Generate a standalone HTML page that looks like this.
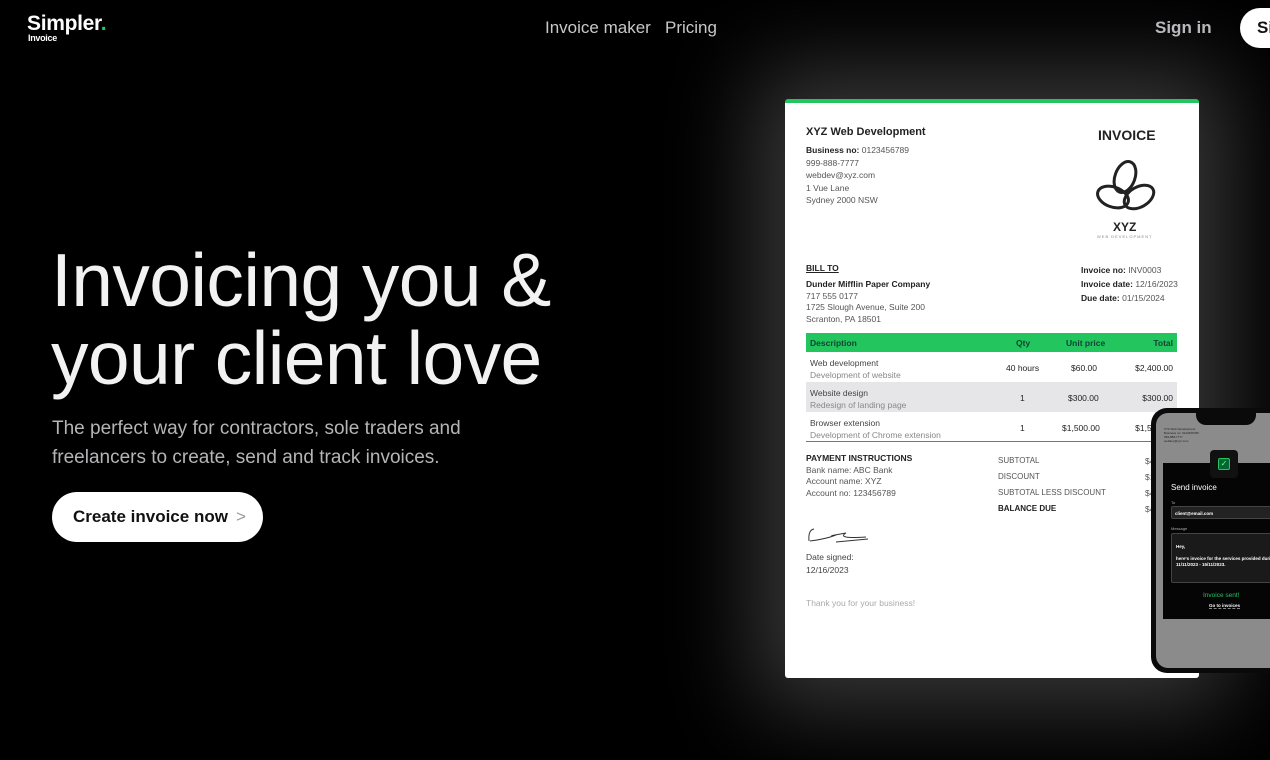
<!DOCTYPE html>
<html><head><meta charset="utf-8"><style>
*{margin:0;padding:0;box-sizing:border-box}
body{width:1270px;height:760px;background:#000;overflow:hidden;position:relative;font-family:"Liberation Sans",Arial,sans-serif;color:#fff}
.abs{position:absolute}
.logo{left:27px;top:12px;font-size:21px;font-weight:bold;letter-spacing:-0.3px}
.logo span{color:#22c55e}
.logo small{position:absolute;left:1px;top:21px;font-size:9px;font-weight:bold;white-space:nowrap}
.nav{top:18px;font-size:17px;color:#c8c8c8}
h1{position:absolute;left:51px;top:241px;font-weight:normal;font-size:75px;line-height:78px;letter-spacing:-0.6px;color:#f2f2f2}
.sub{left:52px;top:414px;font-size:19px;line-height:29px;color:#b5b5b8}
.btn{left:52px;top:492px;width:211px;height:50px;background:#fff;border-radius:25px;color:#111;font-size:17px;font-weight:bold;padding:15px 0 0 21px}
.btn i{font-style:normal;color:#999;font-weight:normal;margin-left:8px}
.card{left:785px;top:99px;width:414px;height:579px;background:#fff;border-top:4px solid #22c55e;border-radius:3px;box-shadow:0 0 90px 30px rgba(255,255,255,0.22);color:#222;font-size:8.5px}
.card .t{position:absolute;white-space:nowrap}
.g{color:#555}
.tbl{position:absolute;left:21px;top:230px;width:371px}
.row{height:30px;position:relative;font-size:8.5px}
.row div{position:absolute}
.phone{left:1151px;top:408px;width:140px;height:265px;background:#0a0a0a;border-radius:16px;padding:5px}
.scr{width:100%;height:100%;background:#8b8b8b;border-radius:12px;position:relative;overflow:hidden}
</style></head><body>
<div class="abs logo">Simpler<span>.</span><small>Invoice</small></div>
<div class="abs nav" style="left:545px">Invoice maker</div>
<div class="abs nav" style="left:665px">Pricing</div>
<div class="abs nav" style="left:1155px;font-weight:bold;color:#b8b8bc">Sign in</div>
<div class="abs" style="left:1240px;top:8px;width:80px;height:40px;background:#fff;border-radius:20px;color:#111;font-weight:bold;font-size:17px;padding:10px 0 0 17px">Si</div>

<h1>Invoicing you &amp;<br>your client love</h1>
<div class="abs sub">The perfect way for contractors, sole traders and<br>freelancers to create, send and track invoices.</div>
<div class="abs btn">Create invoice now<i>&gt;</i></div>

<div class="abs card">
 <div class="t" style="left:21px;top:23px;font-size:11px;font-weight:bold">XYZ Web Development</div>
 <div class="t g" style="left:21px;top:41px;line-height:12.5px"><b style="color:#222">Business no:</b> 0123456789<br>999-888-7777<br>webdev@xyz.com<br>1 Vue Lane<br>Sydney 2000 NSW</div>
 <div class="t" style="left:313px;top:24px;font-size:14px;font-weight:bold">INVOICE</div>
 <svg class="t" style="left:310px;top:56px" width="64" height="60" viewBox="0 0 64 60"><g fill="none" stroke="#222" stroke-width="3"><ellipse cx="30" cy="18" rx="10" ry="16" transform="rotate(20 30 18)"/><ellipse cx="18" cy="38" rx="10" ry="16" transform="rotate(-70 18 38)"/><ellipse cx="44" cy="38" rx="10" ry="16" transform="rotate(60 44 38)"/></g></svg>
 <div class="t" style="left:328px;top:117px;font-size:12px;font-weight:bold">XYZ</div>
 <div class="t" style="left:312px;top:131px;font-size:4px;color:#888;letter-spacing:1px">WEB DEVELOPMENT</div>
 <div class="t" style="left:21px;top:160px;font-weight:bold;text-decoration:underline">BILL TO</div>
 <div class="t g" style="left:21px;top:176px;line-height:11.5px"><b style="color:#222">Dunder Mifflin Paper Company</b><br>717 555 0177<br>1725 Slough Avenue, Suite 200<br>Scranton, PA 18501</div>
 <div class="t g" style="left:296px;top:160px;line-height:14px"><b style="color:#222">Invoice no:</b> INV0003<br><b style="color:#222">Invoice date:</b> 12/16/2023<br><b style="color:#222">Due date:</b> 01/15/2024</div>
 <div class="tbl">
  <div class="row" style="height:19px;background:#22c55e;font-weight:bold;color:#143"><div style="left:4px;top:5px">Description</div><div style="left:210px;top:5px">Qty</div><div style="left:260px;top:5px">Unit price</div><div style="right:4px;top:5px">Total</div></div>
  <div class="row"><div style="left:4px;top:5px;line-height:12px;color:#444">Web development<br><span style="color:#888">Development of website</span></div><div style="left:200px;top:11px">40 hours</div><div style="left:265px;top:11px">$60.00</div><div style="right:4px;top:11px">$2,400.00</div></div>
  <div class="row" style="background:#e6e6e8"><div style="left:4px;top:5px;line-height:12px;color:#444">Website design<br><span style="color:#888">Redesign of landing page</span></div><div style="left:214px;top:11px">1</div><div style="left:262px;top:11px">$300.00</div><div style="right:4px;top:11px">$300.00</div></div>
  <div class="row" style="border-bottom:1px solid #777"><div style="left:4px;top:5px;line-height:12px;color:#444">Browser extension<br><span style="color:#888">Development of Chrome extension</span></div><div style="left:214px;top:11px">1</div><div style="left:256px;top:11px">$1,500.00</div><div style="right:4px;top:11px">$1,500.00</div></div>
 </div>
 <div class="t g" style="left:21px;top:350px;line-height:11.5px"><b style="color:#222">PAYMENT INSTRUCTIONS</b><br>Bank name: ABC Bank<br>Account name: XYZ<br>Account no: 123456789</div>
 <div class="t g" style="left:213px;top:350px;line-height:16px;font-size:8px">SUBTOTAL<br>DISCOUNT<br>SUBTOTAL LESS DISCOUNT<br><b style="color:#222">BALANCE DUE</b></div>
 <div class="t g" style="left:360px;top:350px;line-height:16px">$4,200<br>$1<br>$4,0<br>$4,0</div>
 <svg class="t" style="left:21px;top:424px" width="65" height="18"><path d="M3 14 Q2 3 8 2 M4 14 Q20 12 30 8 Q18 10 40 6 Q30 12 60 10 M30 15 L62 12" stroke="#333" fill="none" stroke-width="1"/></svg>
 <div class="t g" style="left:21px;top:448px;line-height:12.5px;color:#444">Date signed:<br>12/16/2023</div>
 <div class="t" style="left:21px;top:495px;color:#aaa">Thank you for your business!</div>
</div>

<div class="abs phone"><div class="scr">
 <div style="position:absolute;left:40px;top:-2px;width:60px;height:14px;background:#0a0a0a;border-radius:0 0 10px 10px"></div>
 <div style="position:absolute;left:8px;top:14px;width:40px;height:28px;font-size:3px;color:#222;line-height:4px">XYZ Web Development<br>Business no: 0123456789<br>999-888-7777<br>webdev@xyz.com</div>
 <div style="position:absolute;left:7px;top:50px;width:130px;height:156px;background:#050505">
  <div style="position:absolute;left:8px;top:20px;font-size:8px">Send invoice</div>
  <div style="position:absolute;left:8px;top:37px;font-size:4px;color:#aaa">To</div>
  <div style="position:absolute;left:8px;top:43px;width:120px;height:13px;background:#222;border:1px solid #444;border-radius:2px;font-size:4.5px;padding:4px 3px;font-weight:bold">client@email.com</div>
  <div style="position:absolute;left:8px;top:63px;font-size:4px;color:#aaa">Message</div>
  <div style="position:absolute;left:8px;top:70px;width:120px;height:50px;background:#1a1a1a;border:1px solid #444;border-radius:2px;font-size:4.5px;padding:10px 4px;line-height:6px;font-weight:bold">Hey,<br><br>here's invoice for the services provided during 11/11/2023 - 15/11/2023.</div>
  <div style="position:absolute;left:40px;top:129px;font-size:6.5px;color:#22c55e">Invoice sent!</div>
  <div style="position:absolute;left:46px;top:140px;font-size:4.5px;font-weight:bold;border-bottom:1px dashed #888">Go to invoices</div>
 </div>
 <div style="position:absolute;left:54px;top:37px;width:28px;height:28px;background:#111;border-radius:4px"><div style="margin:8px;width:12px;height:12px;border:1.5px solid #22c55e;border-radius:2px;background:#063;color:#8f8;font-size:8px;text-align:center;line-height:9px">✓</div></div>
</div></div>
</body></html>
